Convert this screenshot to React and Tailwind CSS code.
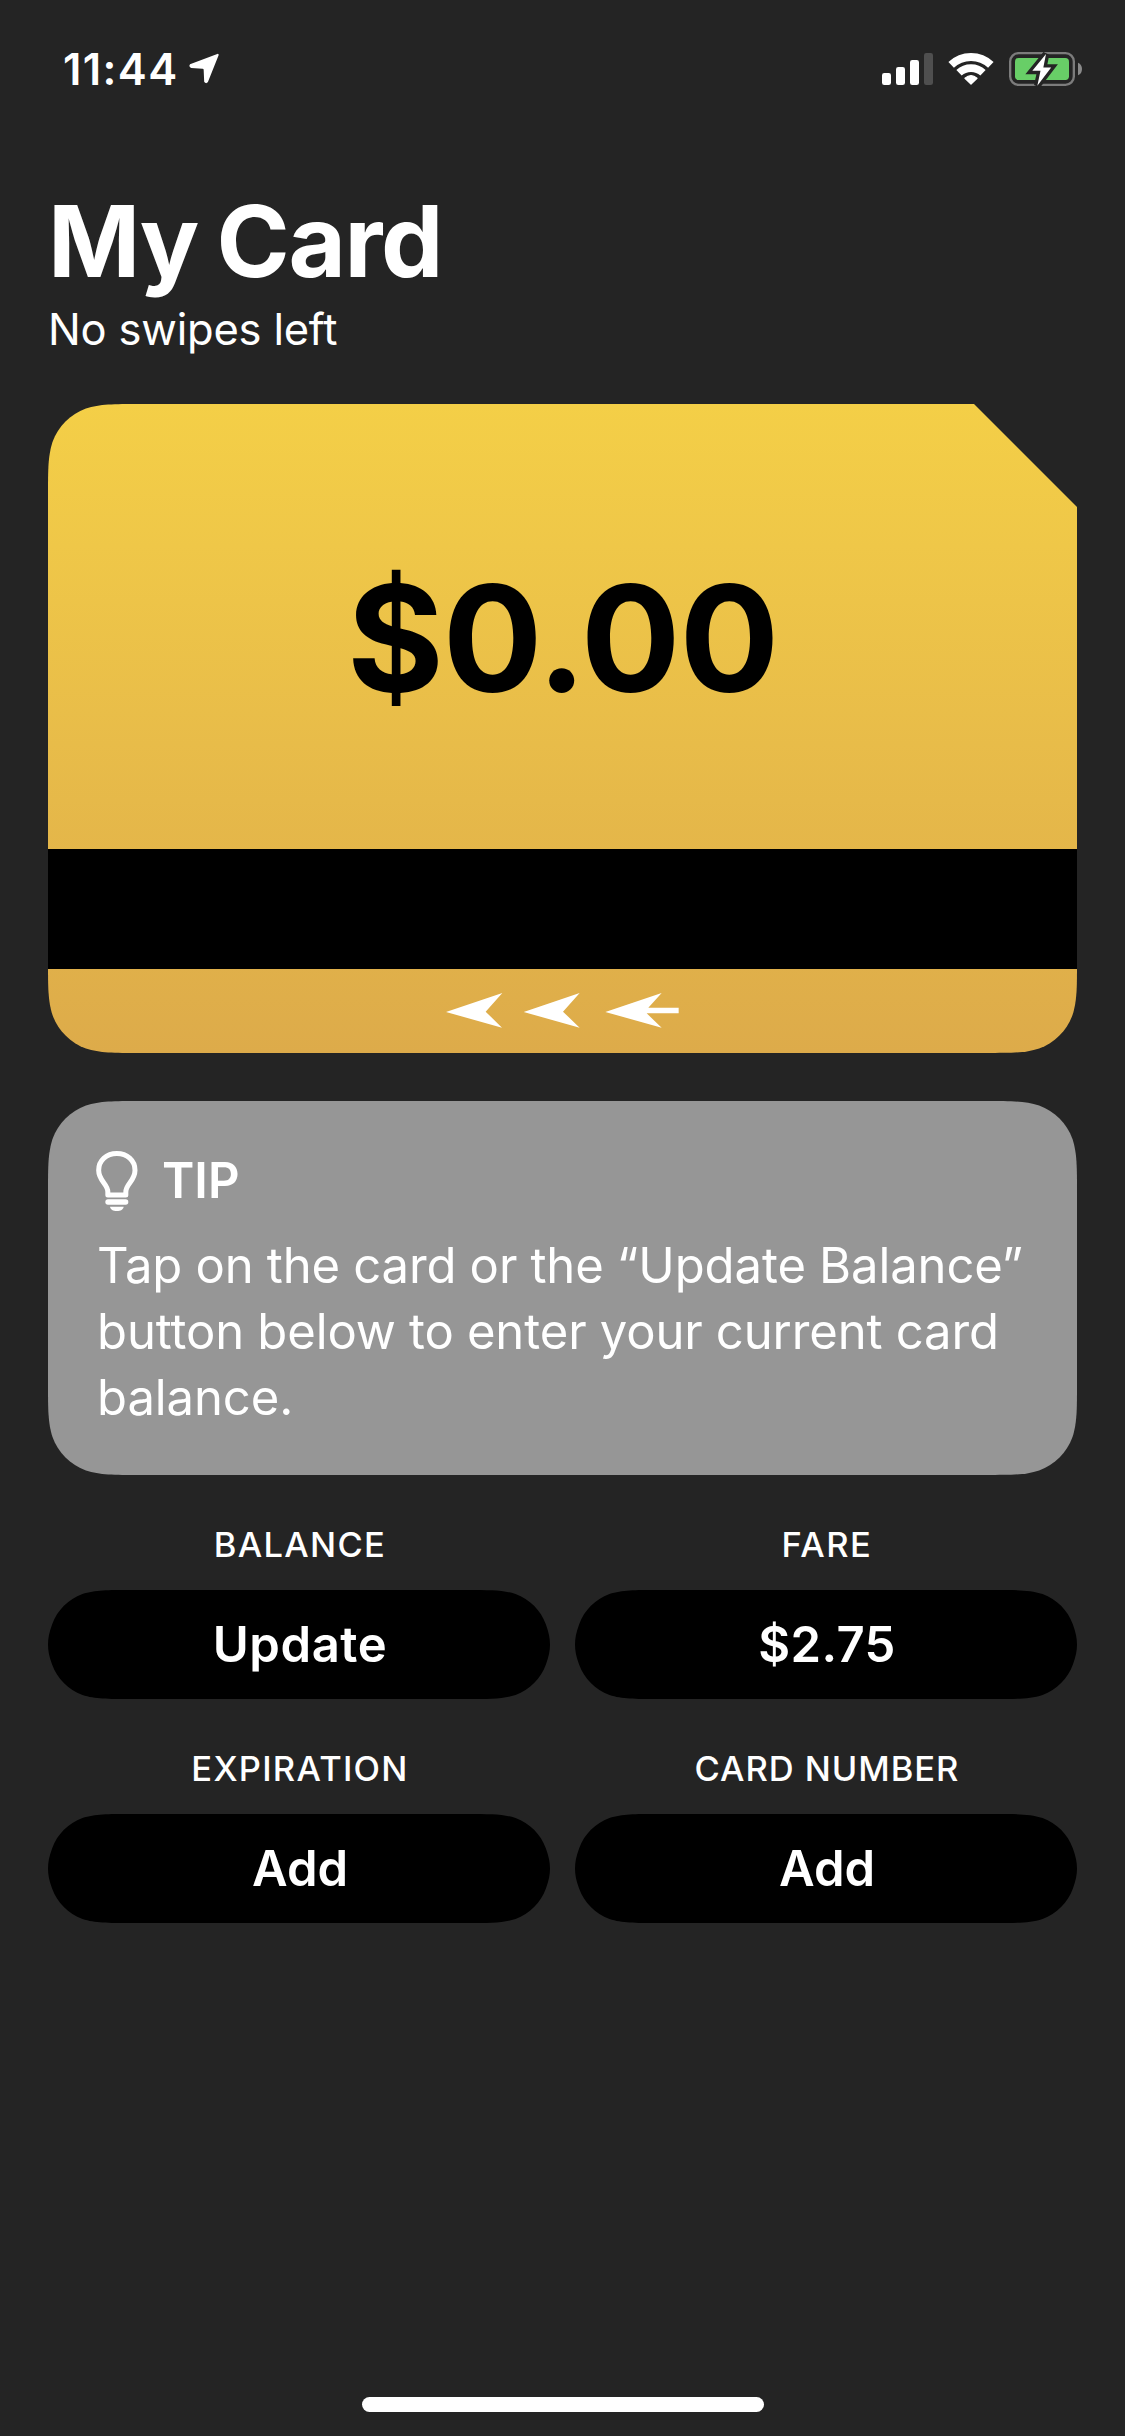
import React from "react";

// Outline of a rectangle with continuous (iOS style) corners.
// When the shape is too low for the full corner, the vertical run is shortened.
function continuousCorners(w, h, radius, cut = 0) {
  const r = Math.min(radius, h / 2);
  const ex = 1.528665 * r;
  const ey = Math.min(ex, h / 2);
  const short = ey < ex;
  const a = 1.08849296 * r;
  const b = 0.86840694 * r;
  const c = 0.63149379 * r;
  const d = 0.07491139 * r;
  const e = 0.37282383 * r;
  const f = 0.16905956 * r;
  const va = short ? 0.89 * r : a;
  const vb = short ? 0.78 * r : b;
  const k = short ? 0.02 * r : 0;
  const topRight = cut
    ? `L${w - cut} 0 L${w} ${cut}`
    : `L${w - ex} 0 C${w - a} 0 ${w - b} 0 ${w - c} ${d} C${w - e} ${f} ${w - f} ${e} ${w - d} ${c} C${w - k} ${vb} ${w} ${va} ${w} ${ey}`;
  return (
    `M${ex} 0 ${topRight} ` +
    `L${w} ${h - ey} C${w} ${h - va} ${w - k} ${h - vb} ${w - d} ${h - c} C${w - f} ${h - e} ${w - e} ${h - f} ${w - c} ${h - d} C${w - b} ${h} ${w - a} ${h} ${w - ex} ${h} ` +
    `L${ex} ${h} C${a} ${h} ${b} ${h} ${c} ${h - d} C${e} ${h - f} ${f} ${h - e} ${d} ${h - c} C${k} ${h - vb} 0 ${h - va} 0 ${h - ey} ` +
    `L0 ${ey} C0 ${va} ${k} ${vb} ${d} ${c} C${f} ${e} ${e} ${f} ${c} ${d} C${b} 0 ${a} 0 ${ex} 0 Z`
  );
}

function clip(w, h, cut) {
  return { clipPath: `path("${continuousCorners(w, h, 60, cut)}")` };
}

function LocationIcon() {
  return (
    <svg className="ml-[10px] mt-[16px] h-[31px] w-[31px]" viewBox="444 70 93 93" fill="white">
      <path
        d="M530 75.500 L498 156 Q495 159 492.500 155.500 L491 120 Q490.500 114.500 485 114 L451 112 Q446 109 450 105.500 Z"
        stroke="white"
        strokeWidth="6"
        strokeLinejoin="round"
      />
    </svg>
  );
}

function SignalIcon() {
  return (
    <svg className="h-[34px] w-[51px]" viewBox="66 66 153 102" fill="white">
      <rect x="66" y="129" width="27" height="36" rx="7" />
      <rect x="108" y="111" width="27" height="54" rx="7" />
      <rect x="150" y="90" width="27" height="75" rx="7" />
      <rect x="192" y="69" width="27" height="96" rx="7" fill="#4f4f4f" />
    </svg>
  );
}

function WifiIcon() {
  return (
    <svg className="ml-[15px] h-[34px] w-[46px]" viewBox="264 66 138 102" fill="none" stroke="white">
      <path d="M273.500 104.500 A86.500 86.500 0 0 1 392.500 104.500" strokeWidth="24" />
      <path d="M297 128.500 A52.500 52.500 0 0 1 369 128.500" strokeWidth="23" />
      <path
        d="M333 162 L315 144.500 Q333 129 351 144.500 Z"
        fill="white"
        strokeWidth="4"
        strokeLinejoin="round"
      />
    </svg>
  );
}

function BatteryIcon() {
  const bolt = "M558 72 L517 122.500 H541.500 L532 167 L573.500 112.500 H550 Z";
  return (
    <svg className="ml-[15px] h-[36px] w-[74px]" viewBox="447 63 222 108">
      <rect x="450.500" y="69.500" width="191" height="95" rx="25" fill="none" stroke="#7c7c7c" strokeWidth="7" />
      <path d="M654 98 Q666 103 666 117 Q666 131 654 136 Z" fill="#8a8a8a" />
      <rect x="465" y="84" width="162" height="66" rx="11" fill="#68ce67" />
      <path d={bolt} fill="#242424" stroke="#242424" strokeWidth="20" strokeLinejoin="miter" />
      <path d={bolt} fill="white" />
    </svg>
  );
}

function SwipeArrows() {
  return (
    <svg className="h-[35px] w-[233px]" viewBox="79 98 699 105" fill="white">
      <path d="M79 155 L248 98 L198 154 L247 202 Z" />
      <path d="M312 155 L480 98 L430 154 L480 202 Z" />
      <path d="M557 155 L726 98 L686 142 H777 V159 H681 L726 202 Z" />
    </svg>
  );
}

function BulbIcon() {
  return (
    <svg className="h-[60px] w-[42px]" viewBox="167 183 126 180" fill="none">
      <path
        d="M202.500 315 V306 C202.500 282 175 273 175 241 C175 210.500 199 190.500 229.500 190.500 C260 190.500 284 210.500 284 241 C284 273 256.500 282 256.500 306 V315 Z"
        stroke="white"
        strokeWidth="15"
        strokeLinejoin="round"
      />
      <rect x="195" y="328" width="69" height="16" rx="8" fill="white" />
      <path d="M209 350 H250 C249 358 241 363 229.500 363 C218 363 210 358 209 350 Z" fill="white" />
    </svg>
  );
}

function Field({ label, labelClass, value, valueClass }) {
  return (
    <div className="flex flex-col">
      <div className={`h-[57px] pl-[2px] text-center text-[34.5px] leading-[24px] font-[450] ${labelClass}`}>{label}</div>
      <button
        className={`flex h-[109px] items-center justify-center bg-black pl-[2px] text-[49px] leading-[60px] font-semibold ${valueClass}`}
        style={clip(502, 109)}
      >
        {value}
      </button>
    </div>
  );
}

export default function App() {
  return (
    <div className="flex h-[2436px] w-[1125px] flex-col bg-[#242424] font-['Inter','Liberation_Sans',sans-serif] text-white">
      <header className="flex h-[132px] shrink-0 items-start justify-between pl-[63px] pr-[42px]">
        <div className="mt-[37px] flex items-start">
          <span className="text-[43.5px] leading-[64px] font-semibold tracking-[1.4px]">11:44</span>
          <LocationIcon />
        </div>
        <div className="mt-[51px] flex items-center">
          <SignalIcon />
          <WifiIcon />
          <BatteryIcon />
        </div>
      </header>

      <main className="flex flex-col px-[48px]">
        <h1 className="mt-[49px] text-[99px] leading-[120px] font-bold tracking-[-1.4px] [word-spacing:-3.5px]">
          My Card
        </h1>
        <p className="mt-[1px] text-[43.5px] leading-[54px] tracking-[-0.2px]">No swipes left</p>

        <section
          className="mt-[48px] flex h-[649px] flex-col bg-linear-to-b from-[#f4cf47] to-[#ddab4a]"
          style={clip(1029, 649, 103)}
        >
          <div className="flex h-[445px] items-center justify-center pt-[25px] text-[148px] leading-[180px] font-bold tracking-[-1.2px] text-black">
            $0.00
          </div>
          <div className="h-[120px] bg-black" />
          <div className="flex h-[84px] items-center justify-center pb-[2px]">
            <SwipeArrows />
          </div>
        </section>

        <section className="mt-[48px] flex h-[374px] flex-col bg-[#969696] pt-[50px] pl-[48px]" style={clip(1029, 374)}>
          <div className="flex h-[60px] items-center">
            <BulbIcon />
            <h2 className="ml-[24px] text-[49px] leading-[60px] font-semibold">TIP</h2>
          </div>
          <p className="mt-[22px] pl-px text-[49px] leading-[66.2px] tracking-[-0.1px] [word-spacing:-0.5px]">
            Tap on the card or the “Update Balance”
            <br />
            button below to enter your current card
            <br />
            balance.
          </p>
        </section>

        <section className="mt-[58px] grid grid-cols-2 gap-x-[25px] gap-y-[58px]">
          <Field label="BALANCE" labelClass="tracking-[1.3px]" value="Update" valueClass="tracking-[0.6px]" />
          <Field label="FARE" labelClass="tracking-[1.5px]" value="$2.75" valueClass="tracking-[0.4px]" />
          <Field label="EXPIRATION" labelClass="tracking-[1.25px]" value="Add" valueClass="tracking-normal" />
          <Field label="CARD NUMBER" labelClass="tracking-[0.95px]" value="Add" valueClass="tracking-normal" />
        </section>
      </main>

      <div className="mt-auto mb-[24px] h-[15px] w-[402px] self-center rounded-full bg-white" />
    </div>
  );
}
